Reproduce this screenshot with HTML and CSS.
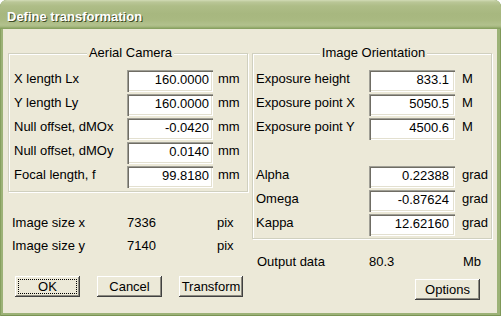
FILE: index.html
```html
<!DOCTYPE html>
<html>
<head>
<meta charset="utf-8">
<title>Define transformation</title>
<link rel="stylesheet" href="styles.css">
</head>
<body>
<div class="window">
  <div class="titlebar"><span class="title">Define transformation</span></div>
  <div class="client">
    <div class="col col-left">
      <fieldset class="group group-left">
        <legend>Aerial Camera</legend>
        <div class="row"><span class="lbl">X length Lx</span><span class="field">160.0000</span><span class="unit">mm</span></div>
        <div class="row"><span class="lbl">Y length Ly</span><span class="field">160.0000</span><span class="unit">mm</span></div>
        <div class="row"><span class="lbl">Null offset, dMOx</span><span class="field">-0.0420</span><span class="unit">mm</span></div>
        <div class="row"><span class="lbl">Null offset, dMOy</span><span class="field">0.0140</span><span class="unit">mm</span></div>
        <div class="row"><span class="lbl">Focal length, f</span><span class="field">99.8180</span><span class="unit">mm</span></div>
      </fieldset>
      <div class="info info-left">
        <span>Image size x</span><span>7336</span><span>pix</span>
        <span>Image size y</span><span>7140</span><span>pix</span>
      </div>
      <div class="buttons">
        <button class="btn btn-default"><span class="focus">OK</span></button>
        <button class="btn">Cancel</button>
        <button class="btn btn-narrow">Transform</button>
      </div>
    </div>
    <div class="col col-right">
      <fieldset class="group group-right">
        <legend>Image Orientation</legend>
        <div class="row"><span class="lbl">Exposure height</span><span class="field">833.1</span><span class="unit">M</span></div>
        <div class="row"><span class="lbl">Exposure point X</span><span class="field">5050.5</span><span class="unit">M</span></div>
        <div class="row"><span class="lbl">Exposure point Y</span><span class="field">4500.6</span><span class="unit">M</span></div>
        <div class="row row-blank"></div>
        <div class="row"><span class="lbl">Alpha</span><span class="field">0.22388</span><span class="unit">grad</span></div>
        <div class="row"><span class="lbl">Omega</span><span class="field">-0.87624</span><span class="unit">grad</span></div>
        <div class="row"><span class="lbl">Kappa</span><span class="field">12.62160</span><span class="unit">grad</span></div>
      </fieldset>
      <div class="info info-right">
        <span>Output data</span><span>80.3</span><span>Mb</span>
      </div>
      <div class="buttons buttons-right">
        <button class="btn">Options</button>
      </div>
    </div>
  </div>
</div>
</body>
</html>
```

FILE: styles.css
```css
* { box-sizing: border-box; }
html, body { margin: 0; padding: 0; }
body {
  width: 501px;
  height: 316px;
  overflow: hidden;
  background: #ffffff;
  font-family: "Liberation Sans", Arial, sans-serif;
  font-size: 13px;
  color: #000;
}
.window {
  width: 501px;
  height: 316px;
  display: flex;
  flex-direction: column;
  background: #9cb277;
  border-radius: 7px 7px 0 0;
  overflow: hidden;
  box-shadow: inset 1px 0 #86a05f, inset -1px 0 #7f9858, inset 0 -1px #7a9454;
}
.titlebar {
  height: 29px;
  flex: none;
  padding: 4px 0 0 7px;
  line-height: 25px;
  background: linear-gradient(to bottom, #d2dbb6 0, #bac797 2px, #aebd87 6px, #a7b77f 14px, #a9b981 20px, #b2c18d 25px, #a3b67c 27px, #8aa263 28px, #86a05f 29px);
}
.title {
  color: #fff;
  font-weight: bold;
  font-size: 13px;
  text-shadow: 1px 1px #3d4a24;
}
.client {
  flex: 1;
  margin: 0 4px 3px 3px;
  background: #ece9d8;
  padding: 16px 5px 0 5px;
  display: flex;
  gap: 4px;
}
.col {
  width: 240px;
  display: flex;
  flex-direction: column;
}
.group {
  margin: 0;
  border: 1px solid #d0d0bf;
  box-shadow: inset 1px 1px #fff, 1px 1px #fff;
  display: flex;
  flex-direction: column;
  gap: 2px;
}
.group legend {
  margin: 0 auto;
  padding: 0 2px;
  line-height: 16px;
  background: #ece9d8;
}
.group-left { padding: 9px 0 3px 5px; }
.group-right { padding: 9px 0 2px 3px; }
.row {
  display: grid;
  height: 22px;
  align-items: start;
  grid-template-columns: 113px 86px auto;
}
.lbl, .unit {
  margin-top: 1px;
  line-height: 16px;
  white-space: nowrap;
}
.group-left .unit { margin-left: 5px; }
.group-right .unit { margin-left: 7px; }
.field {
  height: 22px;
  background: #fff;
  text-align: right;
  line-height: 16px;
  padding: 2px 4px 2px 2px;
  box-shadow: inset 1px 1px #a09f96, inset 2px 2px #6f6d64, inset -1px -1px #fff, inset -2px -2px #e3e0d0;
}
.group-right .field { padding-right: 6px; }
.info {
  display: grid;
  grid-auto-rows: 23px;
  line-height: 23px;
}
.info-left {
  margin-top: 19px;
  padding-left: 4px;
  grid-template-columns: 115px 90px auto;
}
.info-right {
  margin-top: 11px;
  padding-left: 5px;
  grid-template-columns: 112px 94px auto;
}
.buttons {
  display: flex;
  gap: 17px;
  padding-left: 7px;
  margin-top: 19px;
}
.buttons-right {
  margin-top: 6px;
  justify-content: flex-end;
  padding-right: 12px;
}
.btn {
  width: 65px;
  height: 21px;
  padding: 0;
  margin: 0;
  border: none;
  background: #ece9d8;
  font-family: "Liberation Sans", Arial, sans-serif;
  font-size: 13px;
  color: #000;
  line-height: 21px;
  box-shadow: inset -1px -1px #404040, inset 1px 1px #fff, inset -2px -2px #8c8a80;
}
.btn-narrow { width: 64px; }
.btn-default { padding: 3px; }
.focus {
  display: block;
  height: 100%;
  border: 1px dotted #000;
  line-height: 13px;
}
```
